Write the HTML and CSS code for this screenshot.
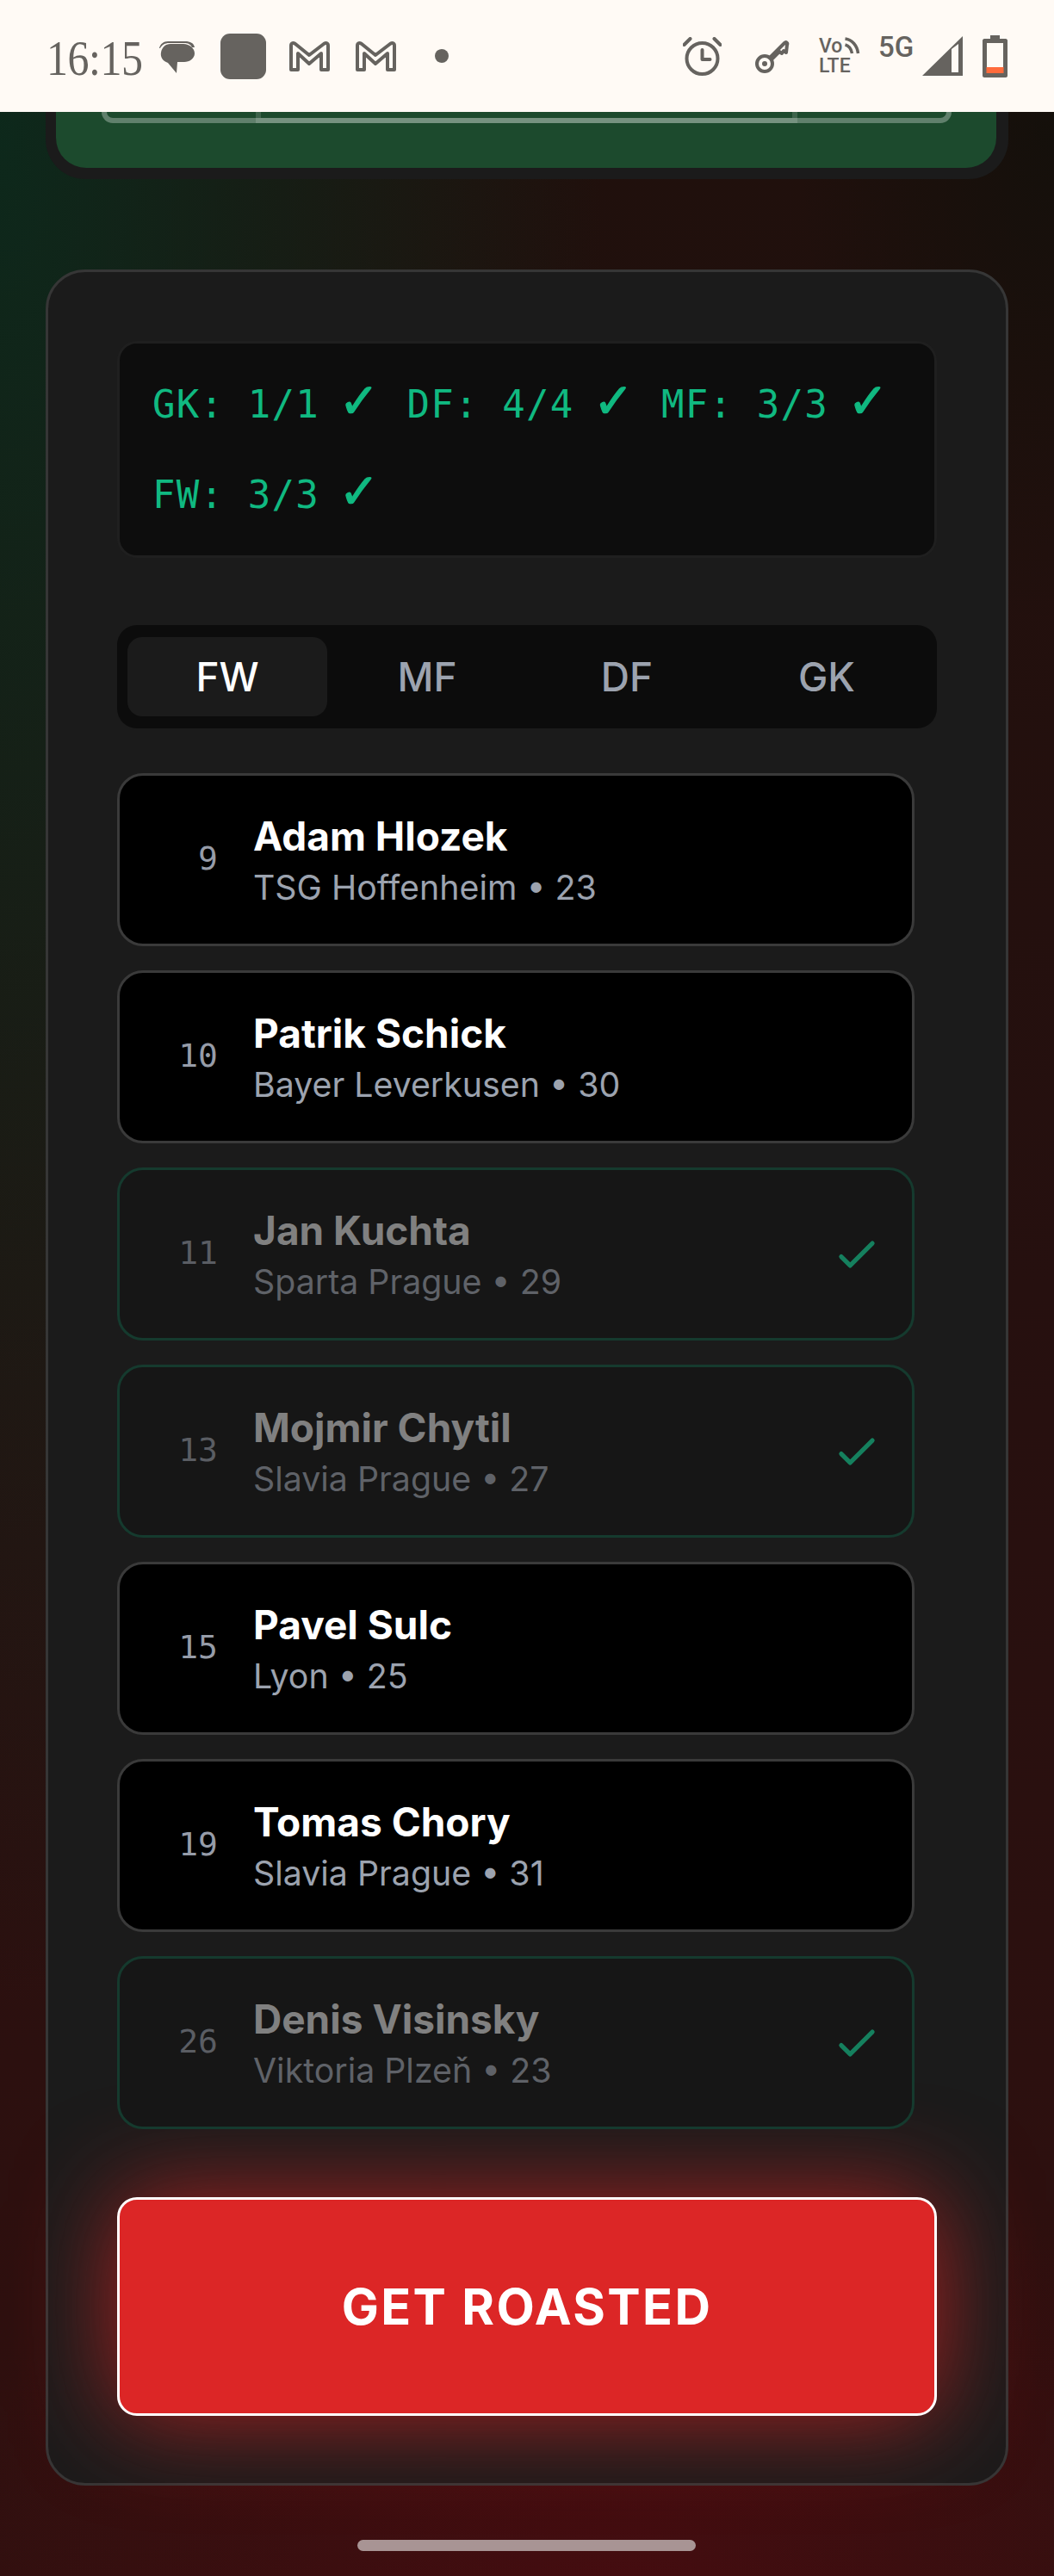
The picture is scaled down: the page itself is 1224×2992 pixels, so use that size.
FILE: index.html
```html
<!DOCTYPE html>
<html lang="en">
<head>
<meta charset="utf-8">
<title>Get Roasted</title>
<link rel="stylesheet" href="styles.css">
</head>
<body>
<div class="phone">
  <header class="status">
    <span class="time">16:15</span>
    <svg class="ic ic-chat" viewBox="0 0 43 41"><path class="fill" d="M11 3h20c6 0 10 2 11 7l-3 0c-2-4-5-5-9-5H12C8 5 4 7 2 11l-1 0C2 6 6 3 11 3z"/><path class="fill" d="M14 6h15c7 0 13 5 13 11s-6 10-12 10h-8l-1 13-10-12C5 26 2 21 3 16 4 10 8 6 14 6z"/></svg>
    <span class="square"></span>
    <svg class="ic ic-m" viewBox="0 0 49 37"><path class="line" d="M3 34V6c0-3 3-4 5-2l16 13L41 4c2-2 5-1 5 2v28h-8V15L24 27 11 15v19z"/></svg>
    <svg class="ic ic-m ic-m2" viewBox="0 0 49 37"><path class="line" d="M3 34V6c0-3 3-4 5-2l16 13L41 4c2-2 5-1 5 2v28h-8V15L24 27 11 15v19z"/></svg>
    <span class="dot"></span>
    <span class="grow"></span>
    <svg class="ic ic-alarm" viewBox="0 0 45 45"><circle class="line" cx="22.500" cy="25" r="18"/><path class="line" d="M22.500 15v11h9M1.500 9l7-7M43.500 9l-7-7"/></svg>
    <svg class="ic ic-key" viewBox="0 0 40 40"><circle class="line" cx="11" cy="29" r="9"/><circle class="fill" cx="11" cy="29" r="3"/><path class="line" d="M17 22L34 5c2-2 4 0 3 2l-1 9-3-2-2 3-3-2-2 2-6 6"/></svg>
    <div class="net">
      <div class="volte">
        <div class="vo-row"><span>Vo</span><svg class="arcs" viewBox="0 0 18 22"><path class="thin" d="M1 3c8 1 14 8 15 17M1 10c4 1 7 5 8 10"/></svg></div>
        <span>LTE</span>
      </div>
      <span class="g5">5G</span>
    </div>
    <svg class="ic ic-signal" viewBox="0 0 47 46"><path class="fill" fill-rule="evenodd" d="M47 0v46H0zM34 15L34 42h8V9z"/></svg>
    <svg class="ic ic-batt" viewBox="0 0 29 49"><path class="fill" fill-rule="evenodd" d="M9 0h11v4h7c1 0 2 1 2 2v41c0 1-1 2-2 2H2c-1 0-2-1-2-2V6c0-1 1-2 2-2h7zM5 9v35h19V9z"/><rect class="batt-low" x="4.500" y="37" width="20" height="7"/></svg>
  </header>

  <main class="content">
    <section class="pitch-card">
      <div class="pitch">
        <div class="pitch-inner">
          <div class="penalty"></div>
        </div>
      </div>
    </section>

    <section class="panel">
      <div class="summary">
        <span class="count">GK: 1/1 <span class="mark">✓</span></span>
        <span class="count">DF: 4/4 <span class="mark">✓</span></span>
        <span class="count">MF: 3/3 <span class="mark">✓</span></span>
        <span class="count">FW: 3/3 <span class="mark">✓</span></span>
      </div>

      <nav class="tabs">
        <span class="tab tab-active">FW</span>
        <span class="tab">MF</span>
        <span class="tab">DF</span>
        <span class="tab">GK</span>
      </nav>

      <ul class="players">
        <li class="player">
          <span class="num">9</span>
          <div class="info"><div class="name">Adam Hlozek</div><div class="sub">TSG Hoffenheim • 23</div></div>
        </li>
        <li class="player">
          <span class="num">10</span>
          <div class="info"><div class="name">Patrik Schick</div><div class="sub">Bayer Leverkusen • 30</div></div>
        </li>
        <li class="player picked">
          <span class="num">11</span>
          <div class="info"><div class="name">Jan Kuchta</div><div class="sub">Sparta Prague • 29</div></div>
          <svg class="tick" viewBox="0 0 24 24"><path d="M5 13l4 4L19 7"/></svg>
        </li>
        <li class="player picked">
          <span class="num">13</span>
          <div class="info"><div class="name">Mojmir Chytil</div><div class="sub">Slavia Prague • 27</div></div>
          <svg class="tick" viewBox="0 0 24 24"><path d="M5 13l4 4L19 7"/></svg>
        </li>
        <li class="player">
          <span class="num">15</span>
          <div class="info"><div class="name">Pavel Sulc</div><div class="sub">Lyon • 25</div></div>
        </li>
        <li class="player">
          <span class="num">19</span>
          <div class="info"><div class="name">Tomas Chory</div><div class="sub">Slavia Prague • 31</div></div>
        </li>
        <li class="player picked">
          <span class="num">26</span>
          <div class="info"><div class="name">Denis Visinsky</div><div class="sub">Viktoria Plzeň • 23</div></div>
          <svg class="tick" viewBox="0 0 24 24"><path d="M5 13l4 4L19 7"/></svg>
        </li>
      </ul>

      <button class="cta">GET ROASTED</button>
    </section>
  </main>

  <div class="home-bar"></div>
</div>
</body>
</html>
```

FILE: styles.css
```css
* { box-sizing: border-box; }
html, body { margin: 0; padding: 0; }
body { font-family: "Inter", "Liberation Sans", sans-serif; background: #2a1010; }

.phone {
  position: relative;
  width: 1224px;
  height: 2992px;
  overflow: hidden;
  display: flex;
  flex-direction: column;
  background:
    radial-gradient(ellipse 800px 520px at 720px 100%, rgba(72, 12, 16, .85), rgba(72, 12, 16, 0) 100%),
    radial-gradient(ellipse 300px 600px at 100% 130px, rgba(14, 16, 10, .65), rgba(14, 16, 10, 0) 100%),
    radial-gradient(ellipse 700px 2200px at 0 130px, rgba(10, 45, 30, .85), rgba(10, 45, 30, 0) 100%),
    linear-gradient(180deg, #1f100c 0%, #26100f 50%, #30100f 100%);
}

/* status bar */
.status {
  flex: none;
  height: 130px;
  background: #fffaf5;
  display: flex;
  align-items: center;
  padding-left: 54px;
  padding-right: 54px;
}
.time {
  font-family: "Liberation Serif", serif;
  font-size: 50px;
  line-height: 60px;
  color: #66635f;
  width: 112px;
  margin-top: 4px;
  letter-spacing: -.5px;
  transform: scaleY(1.150);
}
.ic { flex: none; display: block; }
.fill { fill: #66635f; }
.line { fill: none; stroke: #66635f; stroke-width: 4; stroke-linejoin: round; stroke-linecap: round; }
.thin { fill: none; stroke: #66635f; stroke-width: 3.500; }
.ic-chat { width: 43px; height: 41px; margin-left: 18px; }
.square { width: 53px; height: 53px; border-radius: 11px; background: #66635f; margin-left: 29px; }
.ic-m { width: 49px; height: 37px; margin-left: 26px; }
.ic-m2 { margin-left: 28px; }
.dot { width: 16px; height: 16px; border-radius: 50%; background: #66635f; margin-left: 44px; }
.grow { flex: 1; }
.ic-alarm { width: 45px; height: 45px; }
.ic-key { width: 40px; height: 40px; margin-left: 39px; }

.net {
  flex: none;
  display: flex;
  align-items: flex-start;
  height: 46px;
  margin-left: 34px;
  font-family: "Roboto", sans-serif;
  font-weight: 500;
  color: #66635f;
}
.volte {
  display: flex;
  flex-direction: column;
  width: 69px;
  font-size: 23px;
  line-height: 23px;
}
.vo-row { display: flex; align-items: flex-start; }
.arcs { width: 19px; height: 22px; margin-left: 2px; }
.g5 { font-size: 33px; line-height: 26px; width: 43px; }

.ic-signal { width: 47px; height: 46px; margin-left: 8px; }
.ic-batt { width: 29px; height: 49px; margin-left: 23px; }
.batt-low { fill: #ff6b3c; }

/* content */
.content { flex: 1; padding: 0 53px; display: flex; flex-direction: column; }

.pitch-card {
  flex: none;
  height: 78px;
  padding: 0 14px 13px 12px;
  background: #1b1b1b;
  border-radius: 0 0 46px 46px;
}
.pitch {
  height: 65px;
  padding: 0 52px 0 53px;
  background: #1c4a2d;
  border-radius: 0 0 35px 35px;
}
.pitch-inner {
  height: 13px;
  border: 6px solid rgba(255, 255, 255, .3);
  border-top: 0;
  border-radius: 0 0 16px 16px;
  display: flex;
  justify-content: center;
}
.penalty {
  width: 629px;
  height: 13px;
  border: 6px solid rgba(255, 255, 255, .14);
  border-top: 0;
}

.panel {
  flex: none;
  margin-top: 105px;
  height: 2574px;
  padding: 80px;
  background: #1b1b1b;
  border: 3px solid #363636;
  border-radius: 46px;
}

.summary {
  display: flex;
  flex-wrap: wrap;
  gap: 36px 34px;
  height: 252px;
  padding: 36px 38px;
  background: #0d0d0d;
  border: 3px solid #1f1f1f;
  border-radius: 23px;
  align-content: flex-start;
}
.count {
  font-family: "DejaVu Sans Mono", monospace;
  font-size: 44px;
  letter-spacing: 1.200px;
  line-height: 69px;
  color: #10b981;
}
.mark {
  display: inline-block;
  width: 40px;
  margin-left: -5px;
  margin-right: 5px;
  font-family: "DejaVu Sans", sans-serif;
  font-size: 56px;
  font-weight: 700;
  letter-spacing: 0;
  line-height: 0;
  -webkit-text-stroke: 1.200px #10b981;
}

.tabs {
  display: flex;
  margin-top: 78px;
  height: 120px;
  padding: 14px 12px;
  background: #0c0c0c;
  border-radius: 23px;
}
.tab {
  flex: 1;
  display: flex;
  align-items: center;
  justify-content: center;
  border-radius: 17px;
  font-size: 46px;
  font-weight: 500;
  color: #9ca3af;
}
.tab-active { background: #1b1b1b; color: #fff; }

.players {
  list-style: none;
  margin: 52px 0 0;
  padding: 0 26px 0 0;
  display: flex;
  flex-direction: column;
  gap: 28px;
}
.player {
  height: 201px;
  display: flex;
  align-items: center;
  padding: 0 33px 0 43px;
  background: #000;
  border: 3px solid #3a3a3a;
  border-radius: 30px;
}
.num {
  flex: none;
  width: 71px;
  margin-bottom: 3px;
  text-align: right;
  font-family: "DejaVu Sans Mono", monospace;
  font-size: 38px;
  color: #969ca8;
}
.info { margin-left: 41px; }
.name { font-size: 46px; line-height: 63px; font-weight: 700; color: #fff; }
.sub { font-size: 39.300px; line-height: 55px; color: #9ca3af; }
.picked { background: #161616; border-color: #153a2e; }
.picked .num { color: #5a5d63; }
.picked .name { color: #808080; }
.picked .sub { color: #5f6268; }
.tick { width: 62px; height: 62px; margin-left: auto; fill: none; stroke: #15805e; stroke-width: 2; stroke-linecap: round; stroke-linejoin: round; }

.cta {
  display: block;
  width: 100%;
  height: 254px;
  margin-top: 79px;
  font-family: "Inter", sans-serif;
  font-size: 57.500px;
  font-weight: 700;
  letter-spacing: 2.400px;
  color: #fff;
  background: #dc2626;
  border: 3px solid #fff;
  border-radius: 23px;
  box-shadow: 0 0 115px rgba(220, 38, 38, .75);
}

.home-bar {
  position: absolute;
  left: 415px;
  top: 2950px;
  width: 393px;
  height: 13px;
  border-radius: 7px;
  background: #a89494;
}
```
